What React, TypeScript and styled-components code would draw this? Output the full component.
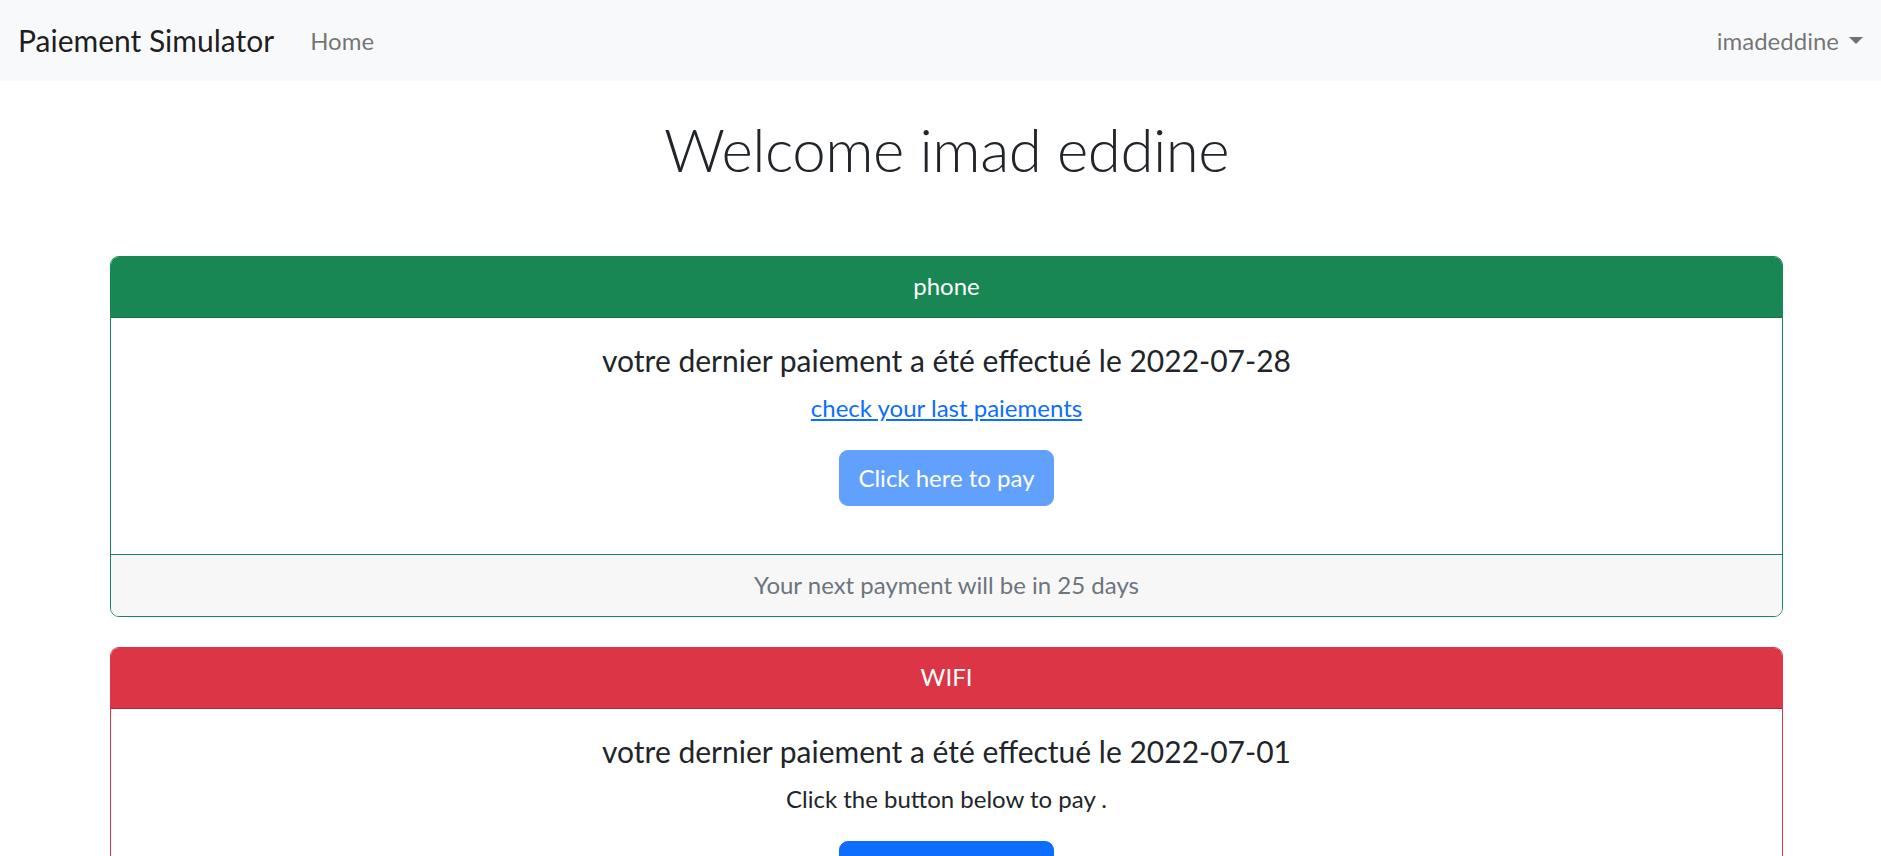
import React from "react";
import styled, { createGlobalStyle } from "styled-components";

const GlobalStyle = createGlobalStyle`
  html, body {
    margin: 0;
    padding: 0;
    background: #ffffff;
    font-family: Lato, "Noto Sans", sans-serif;
    color: #212529;
    overflow: hidden;
  }
  * { box-sizing: border-box; }
`;

const Navbar = styled.nav`
  height: 81px;
  background: #f8f9fa;
  display: flex;
  align-items: center;
  padding: 0 18px;
`;

const Brand = styled.a`
  font-size: 30px;
  color: rgba(0, 0, 0, 0.9);
  text-decoration: none;
  margin-right: 24px;
  line-height: 45px;
`;

const NavLink = styled.a`
  font-size: 24px;
  color: rgba(0, 0, 0, 0.55);
  text-decoration: none;
  padding: 0 12px;
  line-height: 36px;
`;

const Spacer = styled.div`
  flex: 1;
`;

const Dropdown = styled.a`
  font-size: 24px;
  color: rgba(0, 0, 0, 0.55);
  text-decoration: none;
  line-height: 36px;
  display: flex;
  align-items: center;
  &::after {
    content: "";
    display: inline-block;
    margin-left: 10px;
    border-top: 7px solid rgba(0, 0, 0, 0.55);
    border-left: 7px solid transparent;
    border-right: 7px solid transparent;
  }
`;

const Main = styled.main`
  padding: 0 98px 0 110px;
`;

const Title = styled.h1`
  margin: 32px 0 71px;
  font-size: 60px;
  font-weight: 300;
  line-height: 72px;
  letter-spacing: -0.5px;
  text-align: center;
`;

const Card = styled.section<{ $color: string }>`
  border: 1px solid ${(p) => p.$color};
  border-radius: 9px;
  margin-bottom: 30px;
  overflow: hidden;
  text-align: center;
`;

const CardHeader = styled.header<{ $color: string }>`
  background: ${(p) => p.$color};
  color: #ffffff;
  font-size: 24px;
  line-height: 36px;
  padding: 12px 24px 13px;
  border-bottom: 1px solid rgba(0, 0, 0, 0.175);
  margin: -1px -1px 0;
`;

const CardBody = styled.div`
  padding: 24px 24px 24px;
  background: #ffffff;
`;

const CardTitle = styled.h5`
  margin: 0 0 12px;
  font-size: 30px;
  font-weight: 400;
  line-height: 36px;
`;

const Text = styled.p`
  margin: 0 0 24px;
  font-size: 24px;
  line-height: 36px;
`;

const Link = styled.a`
  color: #0d6efd;
  text-decoration: underline;
`;

const Button = styled.button<{ $disabled?: boolean }>`
  font-family: inherit;
  font-size: 24px;
  line-height: 36px;
  padding: 9px 18px;
  color: #ffffff;
  background: #0d6efd;
  border: 1px solid #0d6efd;
  border-radius: 9px;
  opacity: ${(p) => (p.$disabled ? 0.65 : 1)};
  cursor: pointer;
`;

const ButtonRow = styled.div`
  margin-bottom: 24px;
`;

const FooterWrap = styled.div<{ $color: string }>`
  border-top: 1px solid ${(p) => p.$color};
`;

const CardFooter = styled.footer`
  background: #f7f7f7;
  padding: 12px 24px 13px;
  font-size: 24px;
  line-height: 36px;
  color: #6c757d;
`;

export default function App() {
  return (
    <>
      <GlobalStyle />
      <Navbar>
        <Brand href="#">Paiement Simulator</Brand>
        <NavLink href="#">Home</NavLink>
        <Spacer />
        <Dropdown href="#">imadeddine</Dropdown>
      </Navbar>
      <Main>
        <Title>Welcome imad eddine</Title>
        <Card $color="#198754">
          <CardHeader $color="#198754">phone</CardHeader>
          <CardBody>
            <CardTitle>votre dernier paiement a été effectué le 2022-07-28</CardTitle>
            <Text>
              <Link href="#">check your last paiements</Link>
            </Text>
            <ButtonRow>
              <Button $disabled>Click here to pay</Button>
            </ButtonRow>
          </CardBody>
          <FooterWrap $color="#198754">
            <CardFooter>Your next payment will be in 25 days</CardFooter>
          </FooterWrap>
        </Card>
        <Card $color="#dc3545">
          <CardHeader $color="#dc3545">WIFI</CardHeader>
          <CardBody>
            <CardTitle>votre dernier paiement a été effectué le 2022-07-01</CardTitle>
            <Text>Click the button below to pay .</Text>
            <ButtonRow>
              <Button>Click here to pay</Button>
            </ButtonRow>
          </CardBody>
        </Card>
      </Main>
    </>
  );
}
